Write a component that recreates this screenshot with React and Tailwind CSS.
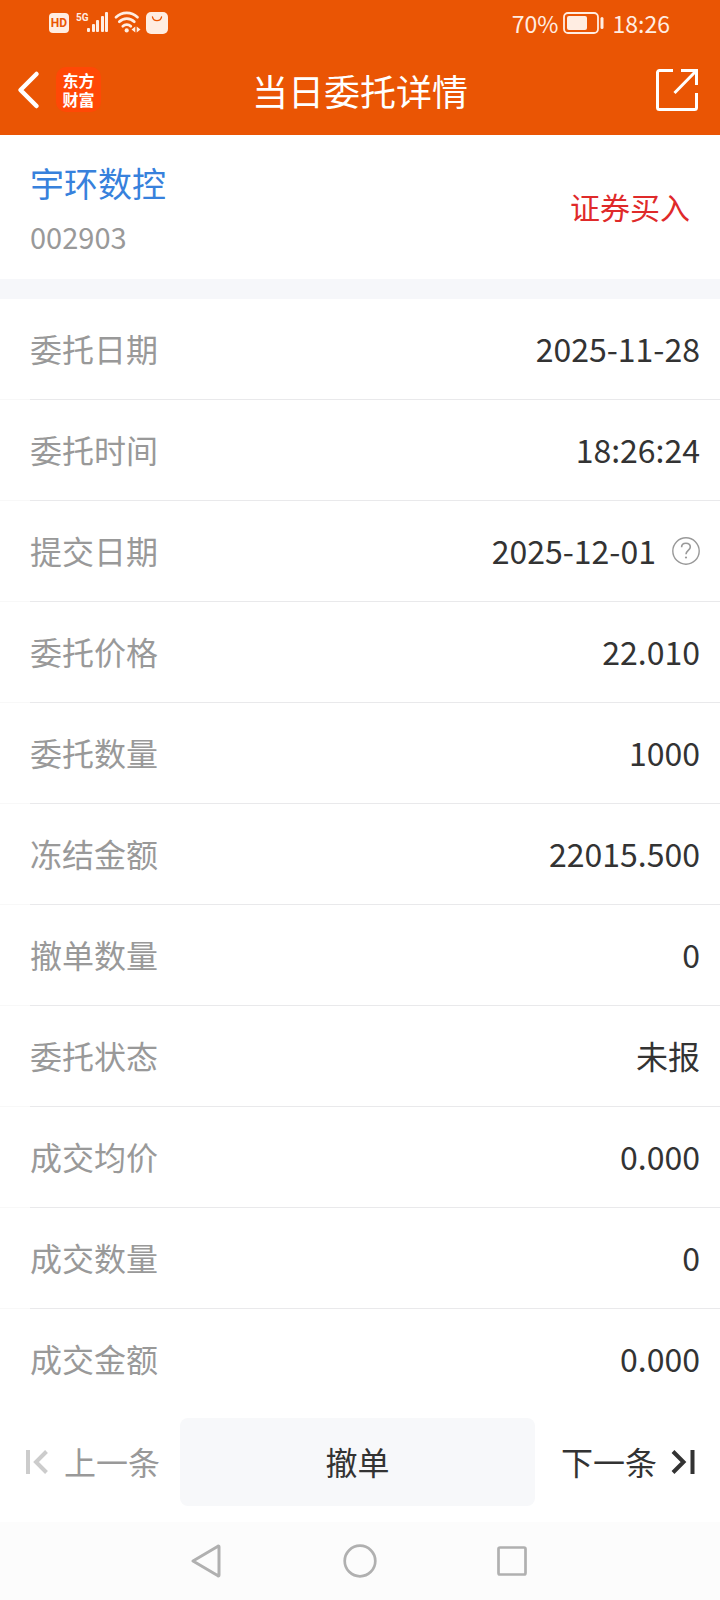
import React from "react";

const rows = [
  ["委托日期", "2025-11-28"],
  ["委托时间", "18:26:24"],
  ["提交日期", "2025-12-01", true],
  ["委托价格", "22.010"],
  ["委托数量", "1000"],
  ["冻结金额", "22015.500"],
  ["撤单数量", "0"],
  ["委托状态", "未报"],
  ["成交均价", "0.000"],
  ["成交数量", "0"],
  ["成交金额", "0.000"],
];

function StatusBar() {
  return (
    <div className="flex h-[46px] items-center justify-between pr-[50px] pl-[49px] text-[#ffede2]">
      <div className="flex items-center">
        <span className="flex h-5 w-5 items-center justify-center rounded-sm bg-[#ffede2] font-['Roboto',sans-serif] text-xs leading-3 font-bold text-[#ea5504]">
          HD
        </span>
        <svg className="ml-[7px] h-6 w-[34px]" viewBox="0 0 34 24" aria-hidden="true">
          <text x="0" y="10" fontSize="10" fontWeight="700" fontFamily="Roboto, sans-serif" fill="currentColor">5G</text>
          <g fill="currentColor">
            <rect x="11" y="17" width="3" height="4" rx="1" />
            <rect x="16" y="13" width="3" height="8" rx="1" />
            <rect x="20" y="9" width="3" height="12" rx="1" />
            <rect x="25" y="5" width="3" height="16" rx="1" />
            <rect x="29" y="1" width="3" height="20" rx="1" />
          </g>
        </svg>
        <svg className="ml-1 h-6 w-7" viewBox="0 0 28 24" fill="none" stroke="currentColor" strokeWidth="2.7" strokeLinecap="round" aria-hidden="true">
          <path d="M2 6.200a15.500 15.500 0 0 1 21.500 0M5.300 10.800a10.500 10.500 0 0 1 15 0M8.800 15.300a5.700 5.700 0 0 1 8 0" />
          <circle cx="12.700" cy="19.400" r="2.100" fill="currentColor" stroke="none" />
          <path d="M21.300 15.500v6l-3.800-3zM22.700 15.500v6l3.800-3z" fill="currentColor" stroke="none" />
        </svg>
        <svg className="ml-1 h-[22px] w-[22px]" viewBox="0 0 22 22" aria-hidden="true">
          <rect width="22" height="22" rx="5" fill="currentColor" />
          <path d="M6.500 5c.8 4.800 8.200 4.800 9 0" fill="none" stroke="#ea5504" strokeWidth="1.400" strokeLinecap="round" />
        </svg>
      </div>
      <div className="flex items-center text-[23px] leading-6">
        <span>70%</span>
        <svg className="mx-1 h-6 w-[42px]" viewBox="0 0 42 24" fill="none" aria-hidden="true">
          <rect x="1" y="2" width="34" height="20" rx="4" stroke="currentColor" strokeWidth="1.800" />
          <rect x="4" y="5" width="20" height="14" rx="2" fill="currentColor" />
          <rect x="37.500" y="6" width="3" height="12" rx="1.500" fill="currentColor" />
        </svg>
        <span className="ml-1">18:26</span>
      </div>
    </div>
  );
}

function Header() {
  return (
    <header className="bg-[#ea5504] text-white">
      <StatusBar />
      <div className="grid h-[89px] grid-cols-[1fr_auto_1fr] items-center px-4 pb-0.5">
        <div className="flex items-center">
          <button type="button" aria-label="返回" className="h-10 w-6">
            <svg className="h-10 w-6" viewBox="0 0 24 40" fill="none" stroke="currentColor" strokeWidth="4.500" strokeLinecap="round" strokeLinejoin="round" aria-hidden="true">
              <path d="M20.500 4L4.500 20l16 16" />
            </svg>
          </button>
          <div className="ml-4 flex h-[45px] w-[45px] items-center justify-center rounded-[10px] bg-[#ff4806] text-center font-['Noto_Sans_CJK_SC',sans-serif] text-base leading-[19px] font-bold">
            <span>
              东方
              <br />
              财富
            </span>
          </div>
        </div>
        <h1 className="text-[36px] leading-10">当日委托详情</h1>
        <button type="button" aria-label="分享" className="mr-1.5 justify-self-end">
          <svg className="h-[42px] w-[42px]" viewBox="0 0 42 42" fill="none" stroke="currentColor" strokeWidth="3" aria-hidden="true">
            <path d="M17 1.500H3.500a2 2 0 0 0-2 2v35a2 2 0 0 0 2 2h35a2 2 0 0 0 2-2V24" />
            <path d="M25 1.500h15.500V16M40.500 1.500L18.500 24" />
          </svg>
        </button>
      </div>
    </header>
  );
}

function HelpIcon() {
  return (
    <svg className="h-7 w-7" viewBox="0 0 28 28" fill="none" stroke="#999" strokeWidth="1.400" aria-hidden="true">
      <circle cx="14" cy="14" r="13.200" />
      <path d="M9.600 10.300c0-2.500 1.800-4 4.300-4s4.400 1.400 4.400 3.700c0 3.300-4.300 3.600-4.300 7.300" strokeWidth="1.600" />
      <circle cx="14" cy="20.500" r="1.100" fill="#999" stroke="none" />
    </svg>
  );
}

export default function App() {
  return (
    <div className="flex min-h-screen flex-col bg-white font-['Noto_Sans_CJK_SC',sans-serif] text-[#333]">
      <Header />
      <main className="flex flex-1 flex-col">
        <section className="flex h-36 items-center justify-between px-[30px]">
          <div className="flex flex-col gap-3 pt-1">
            <a href="#stock" className="text-[34px] leading-[42px] text-[#3781dc]">宇环数控</a>
            <span className="text-[29px] leading-10 text-[#999]">002903</span>
          </div>
          <span className="pb-0.5 text-[30px] leading-10 text-[#df2a2a]">证券买入</span>
        </section>
        <div className="h-5 bg-[#f6f7fa]" />
        <dl>
          {rows.map(([label, value, help], i) => (
            <div key={label} className="flex">
              <div className={`w-[30px] border-b ${i < rows.length - 1 ? "border-[#f8f8f8]" : "border-transparent"}`} />
              <div className={`flex h-[101px] flex-1 items-center justify-between border-b pr-5 text-[32px] leading-10 ${i < rows.length - 1 ? "border-[#e9e9eb]" : "border-transparent"}`}>
                <dt className="pb-0.5 text-[#999]">{label}</dt>
                <dd className="flex items-center gap-4">
                  <span className="pb-0.5">{value}</span>
                  {help && (
                    <button type="button" aria-label="提交日期说明">
                      <HelpIcon />
                    </button>
                  )}
                </dd>
              </div>
            </div>
          ))}
        </dl>
        <div className="mt-2 grid h-[88px] grid-cols-[160px_1fr_160px] gap-5 pr-[5px] text-[32px] leading-10">
          <button type="button" disabled className="flex items-center justify-between pl-[24px] text-[#999]">
            <svg className="h-6 w-6" viewBox="0 0 24 24" fill="none" stroke="#ccc" strokeWidth="4" aria-hidden="true">
              <path d="M4 0v24M22.500 1.500L12 12l10.500 10.500" />
            </svg>
            <span className="pb-0.5">上一条</span>
          </button>
          <button type="button" className="rounded-lg bg-[#f7f8fa] pb-0.5">撤单</button>
          <button type="button" className="flex items-center justify-between pr-[20px] pl-[6px]">
            <span className="pb-0.5">下一条</span>
            <svg className="h-6 w-6" viewBox="0 0 24 24" fill="none" stroke="currentColor" strokeWidth="4" aria-hidden="true">
              <path d="M21.500 0v24M2 1.500L12.500 12 2 22.500" />
            </svg>
          </button>
        </div>
      </main>
      <nav className="mt-4 flex h-[78px] items-center justify-center gap-[118px] bg-[#fcfcfc] text-[#b0b0b0]">
        <button type="button" aria-label="系统返回">
          <svg className="h-[34px] w-[34px]" viewBox="0 0 34 34" fill="none" stroke="currentColor" strokeWidth="3" strokeLinejoin="round" aria-hidden="true">
            <path d="M2 17L27 2.200q1-.5 1 .8v28q0 1.300-1 .8z" />
          </svg>
        </button>
        <button type="button" aria-label="主屏幕">
          <svg className="h-[34px] w-[34px]" viewBox="0 0 34 34" fill="none" stroke="currentColor" strokeWidth="2.700" aria-hidden="true">
            <circle cx="17" cy="17" r="15.300" />
          </svg>
        </button>
        <button type="button" aria-label="最近任务">
          <svg className="h-[34px] w-[34px]" viewBox="0 0 34 34" fill="none" stroke="currentColor" strokeWidth="2.700" aria-hidden="true">
            <rect x="3.500" y="3.500" width="27" height="27" rx="1.500" />
          </svg>
        </button>
      </nav>
    </div>
  );
}
